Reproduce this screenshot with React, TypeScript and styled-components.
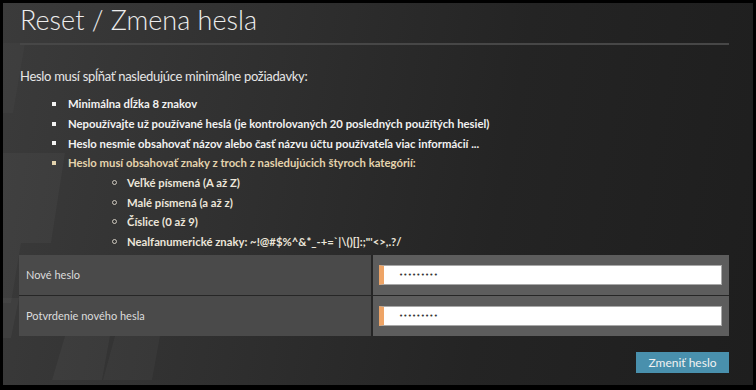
import React from "react";
import styled, { createGlobalStyle } from "styled-components";

const GlobalStyle = createGlobalStyle`
  html, body { margin: 0; padding: 0; background: #000; }
  body { font-family: Lato, "Open Sans", Arial, sans-serif; }
`;

const Page = styled.div`
  width: 756px;
  height: 390px;
  box-sizing: border-box;
  padding: 3px 3px 5px 3px;
  background: #000;
`;

const Panel = styled.main`
  position: relative;
  width: 750px;
  height: 382px;
  box-sizing: border-box;
  padding: 1px 24px 0 17px;
  overflow: hidden;
  background: linear-gradient(100deg, #3b3b3b 0%, #2f2f2f 35%, #242424 65%, #1e1e1e 100%);
  display: flex;
  flex-direction: column;
`;

const Decor = styled.svg`
  position: absolute;
  left: 0;
  top: 0;
  width: 750px;
  height: 382px;
  pointer-events: none;
`;

const Content = styled.div`
  position: relative;
  display: flex;
  flex-direction: column;
`;

const Title = styled.h1`
  margin: 0;
  font-size: 27px;
  line-height: 32px;
  font-weight: 300;
  color: #ededed;
`;

const Rule = styled.hr`
  margin: 7px 0 0 0;
  width: 709px;
  height: 2px;
  border: 0;
  background: #474747;
`;

const Intro = styled.p`
  margin: 21px 0 0 0;
  font-size: 13px;
  letter-spacing: -0.3px;
  line-height: 20px;
  color: #e6e6e6;
`;

const ReqList = styled.ul`
  margin: 8px 0 0 0;
  padding: 0 0 0 32px;
  list-style: none;
`;

const ReqItem = styled.li<{ $accent?: boolean }>`
  display: flex;
  align-items: center;
  height: 19.7px;
  font-size: 11.3px;
  font-weight: 700;
  color: ${(p) => (p.$accent ? "#e4d3ad" : "#f2f2f2")};
  white-space: nowrap;
  &::before {
    content: "";
    flex: none;
    width: 4px;
    height: 4px;
    margin-right: 12px;
    background: currentColor;
  }
`;

const SubList = styled.ul`
  margin: 0;
  padding: 0 0 0 92px;
  list-style: none;
`;

const SubItem = styled.li`
  display: flex;
  align-items: center;
  height: 19.7px;
  font-size: 11.3px;
  font-weight: 700;
  color: #ece6da;
  white-space: nowrap;
  &::before {
    content: "";
    flex: none;
    box-sizing: border-box;
    width: 5px;
    height: 5px;
    border: 1px solid currentColor;
    border-radius: 50%;
    margin-right: 10px;
    opacity: 0.8;
  }
`;

const FormTable = styled.div`
  margin: 3px 0 0 -1px;
  width: 710px;
  display: grid;
  grid-template-columns: 352px 356px;
  column-gap: 2px;
  row-gap: 1px;
  background: #262626;
`;

const LabelCell = styled.label`
  height: 40px;
  box-sizing: border-box;
  padding-left: 7px;
  display: flex;
  align-items: center;
  background: #4a4a4a;
  color: #dcdcdc;
  font-size: 11px;
`;

const ValueCell = styled.div`
  height: 40px;
  box-sizing: border-box;
  padding: 0 7px 0 6px;
  display: flex;
  align-items: center;
  background: #5d5d5d;
`;

const PasswordInput = styled.input`
  width: 100%;
  height: 20px;
  box-sizing: border-box;
  margin: 0;
  padding: 0 0 0 15px;
  border: 1px solid #a8a8a8;
  border-left: 5px solid #eea466;
  background: #fff;
  color: #333;
  font-family: "DejaVu Sans", sans-serif;
  font-size: 7px;
  letter-spacing: 0.2px;
  outline: none;
`;

const Actions = styled.div`
  margin-top: 16px;
  width: 709px;
  display: flex;
  justify-content: flex-end;
`;

const SubmitButton = styled.button`
  width: 93px;
  height: 21px;
  margin: 0;
  padding: 0;
  border: 0;
  background: #4990ad;
  color: #f2f2f2;
  font-family: Lato, "Open Sans", Arial, sans-serif;
  font-size: 12px;
  cursor: pointer;
`;

const fields = [
  { id: "new", label: "Nové heslo" },
  { id: "confirm", label: "Potvrdenie nového hesla" },
];

export default function App() {
  return (
    <Page>
      <GlobalStyle />
      <Panel>
        <Decor viewBox="0 0 750 382" aria-hidden="true">
          <polygon points="0,40 22,40 10,110 0,110" fill="rgba(255,255,255,0.025)" />
          <polygon points="0,150 62,150 48,240 0,240" fill="rgba(255,255,255,0.03)" />
          <polygon points="0,240 18,240 8,300 0,300" fill="rgba(255,255,255,0.03)" />
          <polygon points="0,295 16,295 8,335 0,335" fill="rgba(255,255,255,0.035)" />
          <polygon points="62,333 107,333 99,377 49,377" fill="rgba(255,255,255,0.035)" />
          <polygon points="112,333 157,333 149,377 100,377" fill="rgba(255,255,255,0.03)" />
        </Decor>
        <Content>
          <Title>Reset / Zmena hesla</Title>
          <Rule />
          <Intro>Heslo musí spĺňať nasledujúce minimálne požiadavky:</Intro>
          <ReqList>
            <ReqItem>Minimálna dĺžka 8 znakov</ReqItem>
            <ReqItem>Nepoužívajte už používané heslá (je kontrolovaných 20 posledných použítých hesiel)</ReqItem>
            <ReqItem>Heslo nesmie obsahovať názov alebo časť názvu účtu používateľa viac informácií ...</ReqItem>
            <ReqItem $accent>Heslo musí obsahovať znaky z troch z nasledujúcich štyroch kategórií:</ReqItem>
          </ReqList>
          <SubList>
            <SubItem>Veľké písmená (A až Z)</SubItem>
            <SubItem>Malé písmená (a až z)</SubItem>
            <SubItem>Číslice (0 až 9)</SubItem>
            <SubItem>Nealfanumerické znaky: ~!@#$%^&amp;*_-+=`|\(){}[]:;"'&lt;&gt;,.?/</SubItem>
          </SubList>
          <FormTable>
            {fields.map((f) => (
              <React.Fragment key={f.id}>
                <LabelCell htmlFor={f.id}>{f.label}</LabelCell>
                <ValueCell>
                  <PasswordInput id={f.id} type="password" defaultValue="123456789" />
                </ValueCell>
              </React.Fragment>
            ))}
          </FormTable>
          <Actions>
            <SubmitButton type="button">Zmeniť heslo</SubmitButton>
          </Actions>
        </Content>
      </Panel>
    </Page>
  );
}
